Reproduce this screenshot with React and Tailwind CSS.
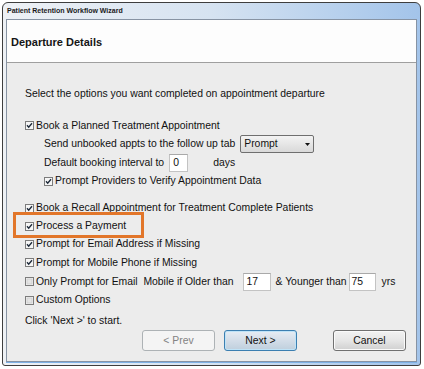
import React from "react";

function Box({ checked }) {
  return (
    <svg width="9" height="9" viewBox="0 0 9 9" className="shrink-0 mr-[2px]">
      <rect x="0.5" y="0.5" width="8" height="8" fill="#f6f6f6" stroke="#7c7c7c" />
      {checked ? (
        <path d="M2 4.3 L3.7 6.2 L7 2.3" fill="none" stroke="#1e2a3a" strokeWidth="1.4" />
      ) : (
        <rect x="2" y="2" width="5" height="5" fill="#e4e4e4" stroke="#cfcfcf" strokeWidth="1" />
      )}
    </svg>
  );
}

function Field({ value, w, pl }) {
  return (
    <div
      className={`h-[18px] bg-white border border-[#c3c3c3] border-t-[#a9a9a9] flex items-center ${w} ${pl}`}
    >
      {value}
    </div>
  );
}

export default function App() {
  return (
    <div className="w-[424px] h-[369px] bg-white pt-[2px] pl-[2px] font-['Liberation_Sans',Arial,sans-serif] text-[10.4px] text-[#111]">
      <div className="w-[419px] h-[364px] border border-[#3e3e3e] rounded-t-[6px] rounded-b-[3px] bg-gradient-to-r from-[#eef1f5] via-[#d6e3f1] to-[#a3c4ea] flex flex-col">
        <div className="h-[16px] pl-[4px] flex items-center text-[7px] font-bold text-[#1b1b1b]">
          Patient Retention Workflow Wizard
        </div>
        <div className="mx-[3px] mb-[3px] flex-1 border border-[#8793a3] bg-[#ececec] flex flex-col shadow-[0_1px_0_#7eb1e6]">
          <div className="h-[43px] bg-[#fdfdfd] border-b border-[#9f9f9f] flex items-center pl-[4px] pt-[2px] text-[11px] font-bold text-[#151515]">
            Departure Details
          </div>
          <div className="relative flex-1 pl-[18px] pt-[22px] flex flex-col">
            <div className="h-[18px] flex items-center">
              Select the options you want completed on appointment departure
            </div>
            <div className="mt-[13px] h-[19px] flex items-center">
              <Box checked />
              Book a Planned Treatment Appointment
            </div>
            <div className="h-[18px] flex items-center pl-[19px]">
              Send unbooked appts to the follow up tab
              <div className="ml-[5px] w-[74px] h-[18px] border border-[#6f6f6f] rounded-[2px] bg-gradient-to-b from-[#f3f3f3] to-[#d9d9d9] flex items-center pl-[3px] pr-[3px] justify-between">
                <span>Prompt</span>
                <svg width="5" height="3" viewBox="0 0 5 3">
                  <path d="M0 0 L5 0 L2.5 3 Z" fill="#111" />
                </svg>
              </div>
            </div>
            <div className="h-[19px] flex items-center pl-[19px]">
              Default booking interval to
              <div className="ml-[5px]">
                <Field value="0" w="w-[19px]" pl="pl-[3px]" />
              </div>
              <span className="ml-[25px]">days</span>
            </div>
            <div className="h-[18px] flex items-center pl-[19px]">
              <Box checked />
              Prompt Providers to Verify Appointment Data
            </div>
            <div className="mt-[9px] h-[18px] flex items-center">
              <Box checked />
              Book a Recall Appointment for Treatment Complete Patients
            </div>
            <div className="h-[18px] flex items-center">
              <Box checked />
              Process a Payment
            </div>
            <div className="h-[18px] flex items-center">
              <Box checked />
              Prompt for Email Address if Missing
            </div>
            <div className="h-[19px] flex items-center">
              <Box checked />
              Prompt for Mobile Phone if Missing
            </div>
            <div className="h-[19px] flex items-center">
              <Box />
              <span className="whitespace-pre">Only Prompt for Email  Mobile if Older than</span>
              <div className="ml-[9px]">
                <Field value="17" w="w-[28px]" pl="pl-[3px]" />
              </div>
              <span className="ml-[5px]">&amp; Younger than</span>
              <div className="ml-[2px]">
                <Field value="75" w="w-[27px]" pl="pl-[2px]" />
              </div>
              <span className="ml-[6px]">yrs</span>
            </div>
            <div className="h-[18px] flex items-center">
              <Box />
              Custom Options
            </div>
            <div className="mt-[3px] h-[18px] flex items-center">
              Click 'Next &gt;' to start.
            </div>
            <div className="flex h-[21px]">
              <div className="ml-[117px] w-[73px] h-[21px] border border-[#adb2b5] rounded-[3px] bg-[#f4f4f4] text-[#838383] flex items-center justify-center">
                &lt; Prev
              </div>
              <div className="ml-[9px] w-[73px] h-[21px] border border-[#3c7fb1] rounded-[3px] bg-gradient-to-b from-[#e6edf4] via-[#d3dde8] to-[#bfcfdd] flex items-center justify-center shadow-[inset_0_0_0_1px_#bfe3f7]">
                Next &gt;
              </div>
              <div className="ml-[36px] w-[73px] h-[21px] border border-[#707070] rounded-[3px] bg-gradient-to-b from-[#f2f2f2] via-[#e6e6e6] to-[#d0d0d0] flex items-center justify-center shadow-[inset_0_0_0_1px_#fafafa]">
                Cancel
              </div>
            </div>
            <div className="absolute left-[6px] top-[149px] w-[131px] h-[26px] border-[3px] border-[#e2762a]" />
          </div>
        </div>
      </div>
    </div>
  );
}
